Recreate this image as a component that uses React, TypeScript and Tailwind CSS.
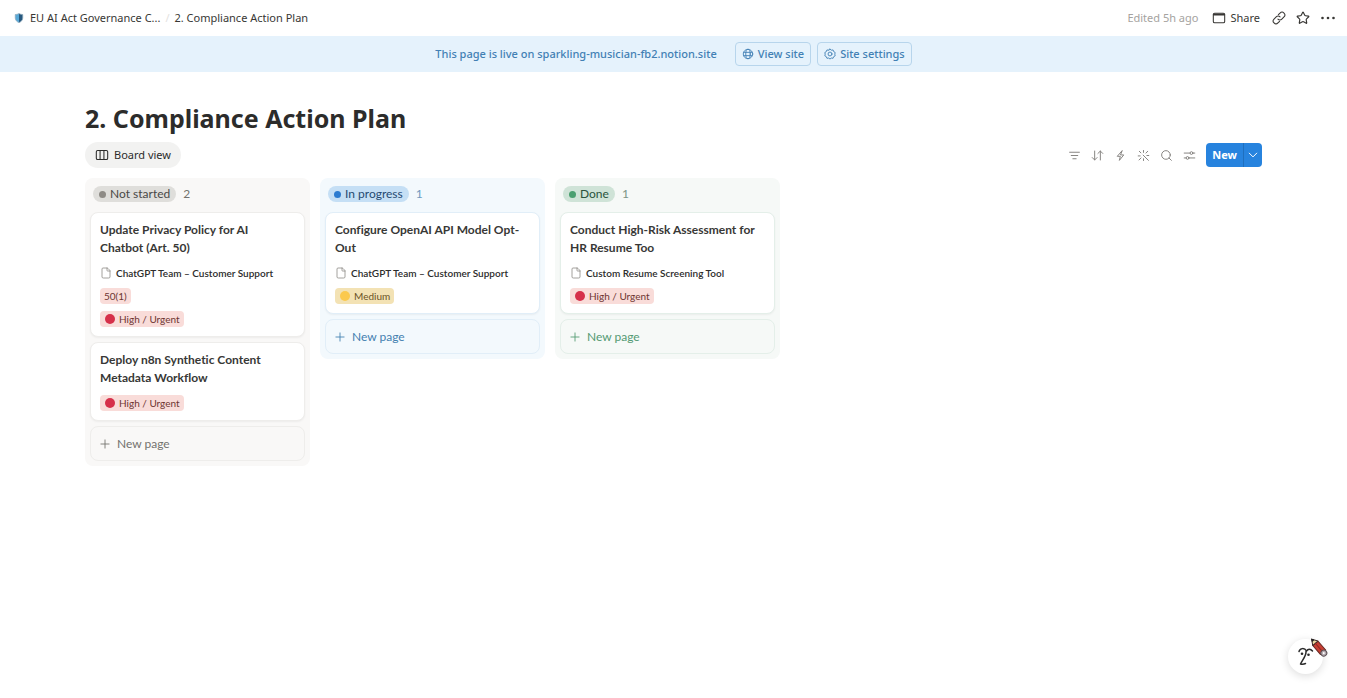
import { useState } from 'react';
import type { ReactNode } from 'react';
import { File, Plus, Search, Star } from 'lucide-react';
import clsx from 'clsx';

type Priority = 'high' | 'medium';

interface Task {
  title: string;
  system?: string;
  article?: string;
  priority: Priority;
}

interface Column {
  name: string;
  tasks: Task[];
  panel: string;
  pill: string;
  dot: string;
  count: string;
  border: string;
  action: string;
}

const COLUMNS: Column[] = [
  {
    name: 'Not started',
    tasks: [
      {
        title: 'Update Privacy Policy for AI Chatbot (Art. 50)',
        system: 'ChatGPT Team – Customer Support',
        article: '50(1)',
        priority: 'high',
      },
      { title: 'Deploy n8n Synthetic Content Metadata Workflow', priority: 'high' },
    ],
    panel: 'bg-[#f9f8f7]',
    pill: 'bg-[#dfdedb] text-[#494846]',
    dot: 'bg-[#8e8b86]',
    count: 'text-[#73726e]',
    border: 'border-[#eeedeb]',
    action: 'text-[#73726e]',
  },
  {
    name: 'In progress',
    tasks: [
      {
        title: 'Configure OpenAI API Model Opt-Out',
        system: 'ChatGPT Team – Customer Support',
        priority: 'medium',
      },
    ],
    panel: 'bg-[#f3f9fd]',
    pill: 'bg-[#c5dff5] text-[#264a72]',
    dot: 'bg-[#2c7bd0]',
    count: 'text-[#6f9abf]',
    border: 'border-[#e1eef8]',
    action: 'text-[#4380b0]',
  },
  {
    name: 'Done',
    tasks: [
      {
        title: 'Conduct High-Risk Assessment for HR Resume Too',
        system: 'Custom Resume Screening Tool',
        priority: 'high',
      },
    ],
    panel: 'bg-[#f6f9f7]',
    pill: 'bg-[#cfe3d7] text-[#2a533c]',
    dot: 'bg-[#4a9f70]',
    count: 'text-[#7c9486]',
    border: 'border-[#e4efe9]',
    action: 'text-[#539a73]',
  },
];

function Icon({ children, className }: { children: ReactNode; className?: string }) {
  return (
    <svg
      viewBox="0 0 16 16"
      fill="none"
      stroke="currentColor"
      strokeWidth="1.2"
      strokeLinecap="round"
      strokeLinejoin="round"
      className={clsx('shrink-0', className)}
      aria-hidden="true"
    >
      {children}
    </svg>
  );
}

function ShieldIcon() {
  return (
    <svg viewBox="0 0 16 16" className="h-3 w-3 shrink-0" aria-hidden="true">
      <path d="M8 2C6.500 3 4.500 3.400 3 3.400V8c0 3 2.200 5 5 6.200z" fill="#58a9d8" />
      <path d="M8 2c1.500 1 3.500 1.400 5 1.400V8c0 3-2.200 5-5 6.200z" fill="#27597f" />
      <path d="M8 2C6.500 3 4.500 3.400 3 3.400V8c0 3 2.200 5 5 6.200 2.800-1.200 5-3.200 5-6.200V3.400C11.500 3.400 9.500 3 8 2z" fill="none" stroke="#8fa9bb" />
    </svg>
  );
}

function TopBar() {
  const [starred, setStarred] = useState(false);

  return (
    <header className="flex h-9 items-center justify-between pr-[11px] pl-[13px] font-['Noto_Sans',sans-serif] text-[11px] text-[#383734]">
      <nav aria-label="Breadcrumb" className="flex items-center">
        <a href="#workspace" className="flex items-center gap-[5px]">
          <ShieldIcon />
          EU AI Act Governance C...
        </a>
        <span className="w-3.5 text-center text-[#e3e2e0]">/</span>
        <a href="#page">2. Compliance Action Plan</a>
      </nav>
      <div className="flex items-center">
        <span className="text-[#a5a39f]">Edited 5h ago</span>
        <button type="button" className="ml-3.5 flex items-center gap-1">
          <Icon className="h-3.5 w-3.5">
            <rect x="1.500" y="2.500" width="13" height="11" rx="1.500" />
            <path d="M2 4h12" strokeWidth="2" />
          </Icon>
          Share
        </button>
        <button type="button" aria-label="Copy link" className="ml-3">
          <Icon className="h-3.5 w-3.5">
            <path d="M7.300 4.200 9.200 2.300a3.100 3.100 0 0 1 4.500 4.500L11.200 9.300a3.100 3.100 0 0 1-4.400 0" />
            <path d="M8.700 11.800 6.800 13.700a3.100 3.100 0 0 1-4.500-4.500L4.800 6.700a3.100 3.100 0 0 1 4.400 0" />
          </Icon>
        </button>
        <button
          type="button"
          aria-label="Favorite"
          aria-pressed={starred}
          onClick={() => setStarred(!starred)}
          className="ml-2.5"
        >
          <Star className="h-3.5 w-3.5" strokeWidth={2} strokeLinejoin="miter" fill={starred ? 'currentColor' : 'none'} />
        </button>
        <button type="button" aria-label="More" className="ml-2.5">
          <svg viewBox="0 0 16 16" className="h-4 w-4" fill="currentColor" aria-hidden="true">
            <circle cx="2.500" cy="8" r="1.300" />
            <circle cx="8" cy="8" r="1.300" />
            <circle cx="13.500" cy="8" r="1.300" />
          </svg>
        </button>
      </div>
    </header>
  );
}

function LiveBanner() {
  const button = 'flex h-6 items-center gap-1 rounded border border-[#b7d5ec] px-1.5';

  return (
    <div className="flex h-9 items-center justify-center gap-1.5 bg-[#e5f2fc] font-['Noto_Sans',sans-serif] text-[11px] font-medium text-[#4280b4]">
      <p className="mr-3">This page is live on sparkling-musician-fb2.notion.site</p>
      <a href="#site" className={button}>
        <Icon className="h-3 w-3">
          <circle cx="8" cy="8" r="6.300" />
          <ellipse cx="8" cy="8" rx="3" ry="6.300" />
          <path d="M2.300 5.800h11.400M2.300 10.200h11.400" />
        </Icon>
        View site
      </a>
      <button type="button" className={button}>
        <Icon className="h-3 w-3">
          <path d="m8 1.400 1.800 1.500 2.300-.3.800 2.200 2 1.200-.5 2.200.5 2.200-2 1.200-.8 2.100-2.300-.3L8 14.700l-1.800-1.300-2.300.3-.8-2.100-2-1.200.5-2.200-.5-2.200 2-1.200.8-2.200 2.300.3z" />
          <circle cx="8" cy="8" r="2.600" />
        </Icon>
        Site settings
      </button>
    </div>
  );
}

function Toolbar() {
  return (
    <div className="flex items-center gap-2.5 text-[#85837f]">
      <button type="button" aria-label="Filter">
        <Icon className="h-[13px] w-[13px]">
          <path d="M2 4h12M4 8h8M6 12h4" />
        </Icon>
      </button>
      <button type="button" aria-label="Sort">
        <Icon className="h-[13px] w-[13px]">
          <path d="M4.500 2.500v11M1.500 10.500l3 3 3-3M11.500 13.500v-11M8.500 5.500l3-3 3 3" />
        </Icon>
      </button>
      <button type="button" aria-label="Automations">
        <Icon className="h-[13px] w-[13px]">
          <path d="M9.800 2.300 4 9h3.800l-1.200 5L12 7.300H8.500z" />
        </Icon>
      </button>
      <button type="button" aria-label="Autofill">
        <Icon className="h-[13px] w-[13px]">
          <path d="m7.500 7.500 6.500 6.500M8 1.800v2.400M2.800 2.800l2 2M1.500 8.500h2.400M5 11l-2.500 2.500M8 12v2.200M13.200 2.800l-2.200 2.200M14.500 8h-2.300" />
        </Icon>
      </button>
      <button type="button" aria-label="Search">
        <Search className="h-[13px] w-[13px]" strokeWidth={1.800} />
      </button>
      <button type="button" aria-label="View settings">
        <Icon className="h-[13px] w-[13px]">
          <path d="M1.500 5h7M12.300 5h2.200M1.500 11h2.200M7.500 11h7" />
          <circle cx="10.400" cy="5" r="1.700" />
          <circle cx="5.600" cy="11" r="1.700" />
        </Icon>
      </button>
      <div className="flex h-6 items-stretch overflow-hidden rounded bg-[#2783de] text-white">
        <button type="button" className="border-r border-[#1f6fbe] px-1.5 font-['Noto_Sans',sans-serif] text-[11px] font-bold">
          New
        </button>
        <button type="button" aria-label="New from template" className="px-1">
          <Icon className="h-3 w-2.5">
            <path d="m2 5 6 6 6-6" strokeWidth="1.600" />
          </Icon>
        </button>
      </div>
    </div>
  );
}

function PriorityTag({ priority }: { priority: Priority }) {
  const isHigh = priority === 'high';
  return (
    <span
      className={clsx(
        'flex h-4 items-center gap-1 rounded-sm pr-1 pl-[5px]',
        isHigh ? 'bg-[#f9dcd9] text-[#6d3531]' : 'bg-[#f3e2b4] text-[#6b5325]',
      )}
    >
      <span className={clsx('h-2.5 w-2.5 rounded-full', isHigh ? 'bg-[#d6304a]' : 'bg-[#fbc94e]')} />
      {isHigh ? 'High / Urgent' : 'Medium'}
    </span>
  );
}

function TaskCard({ task, border }: { task: Task; border: string }) {
  return (
    <article className={clsx('rounded-lg border bg-white px-[9px] pt-2 pb-[9px] shadow-xs', border)}>
      <h2 className="pr-1 text-xs leading-[18px] font-bold text-[#383836]">{task.title}</h2>
      <div className="mt-2 flex flex-col items-start gap-[7px] text-[10px] leading-4">
        {task.system && (
          <a href="#system" className="flex items-center gap-1 font-semibold text-[#2c2c2b]">
            <File className="h-3 w-3 text-[#85837f]" strokeWidth={1.500} />
            {task.system}
          </a>
        )}
        {task.article && (
          <span className="rounded-sm bg-[#f9dcd9] px-1 text-[#6d3531]">{task.article}</span>
        )}
        <PriorityTag priority={task.priority} />
      </div>
    </article>
  );
}

function BoardColumn({ column }: { column: Column }) {
  return (
    <section className={clsx('flex w-[225px] shrink-0 flex-col gap-[5px] rounded-lg px-[5px] pb-[5px]', column.panel)}>
      <div className="flex h-[29px] items-center gap-[7px] px-[3px] pt-[3px] text-xs">
        <span className={clsx('flex h-4 items-center gap-1 rounded-full px-1.5', column.pill)}>
          <span className={clsx('h-[7px] w-[7px] rounded-full', column.dot)} />
          {column.name}
        </span>
        <span className={column.count}>{column.tasks.length}</span>
      </div>
      {column.tasks.map((task) => (
        <TaskCard key={task.title} task={task} border={column.border} />
      ))}
      <button
        type="button"
        className={clsx('flex h-[35px] items-center gap-[5px] rounded-lg border px-[7px] text-xs', column.border, column.action)}
      >
        <Plus className="h-3.5 w-3.5" strokeWidth={1.500} />
        New page
      </button>
    </section>
  );
}

function AssistantButton() {
  return (
    <button
      type="button"
      aria-label="Open assistant"
      className="fixed right-6 bottom-6 flex h-[35px] w-[35px] items-center justify-center rounded-full bg-white shadow-[0_2px_9px_rgba(0,0,0,0.14)]"
    >
      <svg viewBox="0 0 36 36" className="h-9 w-9 shrink-0 overflow-visible" fill="none" strokeLinecap="round" strokeLinejoin="round">
        <path
          d="M11 12.500c1-3.500 5.500-4 7.500-.5 1.500-2.500 4-2.500 6 0M18 12.500c.5 4-3.500 8.500-5.500 12.500 1.800.3 3.500.2 5-.5"
          stroke="#2b2b2b"
          strokeWidth="1.500"
        />
        <circle cx="14" cy="14.800" r="1.300" fill="#2b2b2b" />
        <circle cx="20.500" cy="15.800" r="1.300" fill="#2b2b2b" />
        <g transform="translate(24 0.500) rotate(-41)">
          <path d="M-3.400 5h6.800v12h-6.800z" fill="#c83e32" stroke="#6b2a24" />
          <path d="M0-.5-3.400 5h6.800z" fill="#e9d9a2" stroke="#3c2623" />
          <path d="M0-.5-1 1.500h2z" fill="#222" stroke="#222" />
          <path d="M0 5v12" stroke="#8e2822" />
          <circle cx="0" cy="18" r="3" fill="#b5abb0" stroke="#5d5257" />
          <circle cx="0" cy="18" r="1" fill="#fff" />
        </g>
      </svg>
    </button>
  );
}

export default function App() {
  return (
    <div className="min-h-screen bg-white font-['Lato','Noto_Sans',sans-serif] [font-variant-ligatures:none]">
      <TopBar />
      <LiveBanner />
      <main className="px-[85px] pt-[30px] pb-24">
        <h1 className="font-['Noto_Sans',sans-serif] text-[25px] leading-8 font-bold text-[#2c2c2b]">
          2. Compliance Action Plan
        </h1>
        <div className="mt-2 flex items-center justify-between">
          <button
            type="button"
            className="flex h-[26px] items-center gap-[5px] rounded-full bg-[#f2f2f1] px-2.5 font-['Noto_Sans',sans-serif] text-[11px] text-[#2c2c2b]"
          >
            <Icon className="h-3.5 w-3.5">
              <rect x="1.500" y="2.800" width="13" height="10.400" rx="1.500" />
              <path d="M5.800 2.800v10.400M10.200 2.800v10.400" />
            </Icon>
            Board view
          </button>
          <Toolbar />
        </div>
        <div className="mt-2.5 flex items-start gap-2.5">
          {COLUMNS.map((column) => (
            <BoardColumn key={column.name} column={column} />
          ))}
        </div>
      </main>
      <AssistantButton />
    </div>
  );
}
